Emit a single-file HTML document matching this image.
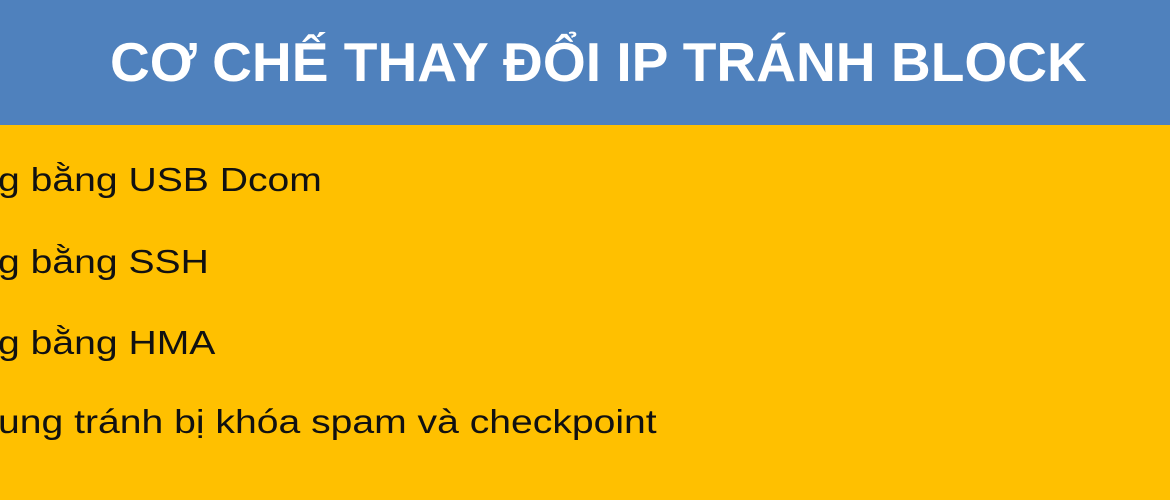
<!DOCTYPE html>
<html><head><meta charset="utf-8"><style>
html,body{margin:0;padding:0;width:1170px;height:500px;overflow:hidden;background:#ffc000;font-family:"Liberation Sans",Arial,sans-serif}
.h{position:absolute;left:0;top:0;width:1170px;height:125px;background:#4f81bd}
.t{position:absolute;left:110px;top:30px;font-size:55px;font-weight:bold;color:#fff;white-space:nowrap;transform:scaleX(1.002);transform-origin:left}
.l{position:absolute;left:-2px;font-size:33px;color:#111;white-space:nowrap;transform:scaleX(1.185);transform-origin:left}
</style></head><body>
<div class="h"></div>
<div class="t">CƠ CHẾ THAY ĐỔI IP TRÁNH BLOCK</div>
<div class="l" style="top:161px">g bằng USB Dcom</div>
<div class="l" style="top:243px">g bằng SSH</div>
<div class="l" style="top:324px">g bằng HMA</div>
<div class="l" style="top:403px">ung tránh bị khóa spam và checkpoint</div>
</body></html>
